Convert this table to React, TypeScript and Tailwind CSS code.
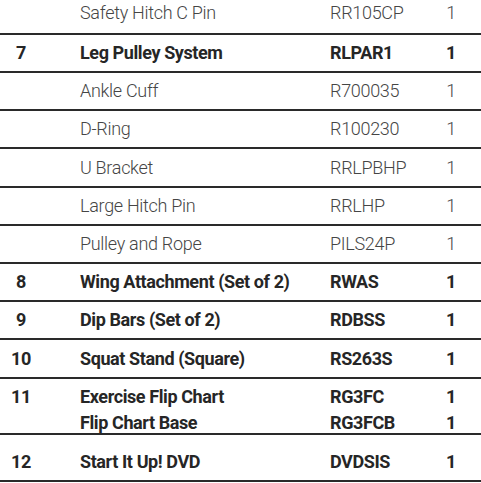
type Row = {
  num?: string;
  names: string[];
  codes: string[];
  qty: string[];
  bold?: boolean;
  h: string;
  pad: string;
};

const rows: Row[] = [
  { names: ['Safety Hitch C Pin'], codes: ['RR105CP'], qty: ['1'], h: 'h-[35px]', pad: 'items-center pb-[7px]' },
  { num: '7', names: ['Leg Pulley System'], codes: ['RLPAR1'], qty: ['1'], bold: true, h: 'h-[38px]', pad: 'items-center' },
  { names: ['Ankle Cuff'], codes: ['R700035'], qty: ['1'], h: 'h-[38px]', pad: 'items-center' },
  { names: ['D-Ring'], codes: ['R100230'], qty: ['1'], h: 'h-[38px]', pad: 'items-center' },
  { names: ['U Bracket'], codes: ['RRLPBHP'], qty: ['1'], h: 'h-[39px]', pad: 'items-center' },
  { names: ['Large Hitch Pin'], codes: ['RRLHP'], qty: ['1'], h: 'h-[38px]', pad: 'items-center' },
  { names: ['Pulley and Rope'], codes: ['PILS24P'], qty: ['1'], h: 'h-[38px]', pad: 'items-center' },
  { num: '8', names: ['Wing Attachment (Set of 2)'], codes: ['RWAS'], qty: ['1'], bold: true, h: 'h-[38px]', pad: 'items-center' },
  { num: '9', names: ['Dip Bars (Set of 2)'], codes: ['RDBSS'], qty: ['1'], bold: true, h: 'h-[38px]', pad: 'items-center' },
  { num: '10', names: ['Squat Stand (Square)'], codes: ['RS263S'], qty: ['1'], bold: true, h: 'h-[39px]', pad: 'items-center' },
  {
    num: '11',
    names: ['Exercise Flip Chart', 'Flip Chart Base'],
    codes: ['RG3FC', 'RG3FCB'],
    qty: ['1', '1'],
    bold: true,
    h: 'h-[56px]',
    pad: 'items-start pt-[5px]',
  },
  { num: '12', names: ['Start It Up! DVD'], codes: ['DVDSIS'], qty: ['1'], bold: true, h: 'h-[47px]', pad: 'items-center pt-[8px]' },
];

const Lines = ({ items }: { items: string[] }) => (
  <>
    {items.map((t, i) => (
      <div key={i}>{t}</div>
    ))}
  </>
);

export default function App() {
  return (
    <div className="w-[481px] bg-white" style={{ fontFamily: 'Roboto, "Liberation Sans", sans-serif' }}>
      {rows.map((r, i) => (
        <div
          key={i}
          className={`flex ${r.pad} ${r.h} border-b-2 border-[#2a2a2a] text-[18px] ${
            r.bold ? 'font-bold text-[#262626] tracking-[-0.4px] leading-[26px]' : 'font-light text-[#454545] tracking-[-0.3px] leading-[26px]'
          }`}
        >
          <div className="w-[42px] text-center">{r.num}</div>
          <div className="ml-[38px] w-[250px]">
            <Lines items={r.names} />
          </div>
          <div className="w-[91px]">
            <Lines items={r.codes} />
          </div>
          <div className="w-[60px] text-center">
            <Lines items={r.qty} />
          </div>
        </div>
      ))}
    </div>
  );
}
